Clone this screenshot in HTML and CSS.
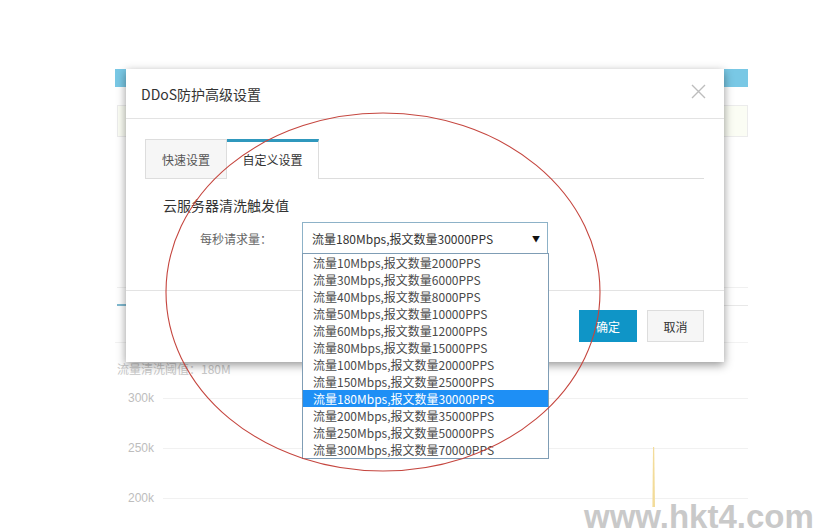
FILE: index.html
```html
<!DOCTYPE html>
<html lang="zh-CN">
<head>
<meta charset="utf-8">
<title>DDoS防护高级设置</title>
<link rel="stylesheet" href="styles.css">
</head>
<body>
<div class="page">
  <div class="bar"></div>
  <div class="notice"></div>
  <div class="subnav"><span class="subnav-active"></span></div>
  <div class="toolbar"></div>
  <div class="threshold">流量清洗阈值：180M</div>
  <div class="chart">
    <div class="row"><span class="axis">300k</span><span class="grid"></span></div>
    <div class="row"><span class="axis">250k</span><span class="grid"></span></div>
    <div class="row"><span class="axis">200k</span><span class="grid"></span></div>
    <svg class="series" width="20" height="70" viewBox="0 0 20 70"><polygon points="9,9 10.2,9 11,69 8.4,69" fill="#f3dc9a"/></svg>
  </div>
</div>

<div class="dialog">
  <div class="dlg-head">
    <span class="dlg-title">DDoS防护高级设置</span>
    <svg class="dlg-close" width="15" height="15" viewBox="0 0 15 15"><path d="M1 1L14 14M14 1L1 14" stroke="#bdbdbd" stroke-width="1.4" fill="none"/></svg>
  </div>
  <div class="dlg-body">
    <div class="tabs">
      <div class="tab">快速设置</div>
      <div class="tab tab-active">自定义设置</div>
    </div>
    <div class="section-title">云服务器清洗触发值</div>
    <div class="form-row">
      <label class="form-label">每秒请求量：</label>
      <div class="select">
        <span class="select-value">流量180Mbps,报文数量30000PPS</span>
        <span class="select-arrow">▼</span>
        <ul class="options">
          <li>流量10Mbps,报文数量2000PPS</li>
          <li>流量30Mbps,报文数量6000PPS</li>
          <li>流量40Mbps,报文数量8000PPS</li>
          <li>流量50Mbps,报文数量10000PPS</li>
          <li>流量60Mbps,报文数量12000PPS</li>
          <li>流量80Mbps,报文数量15000PPS</li>
          <li>流量100Mbps,报文数量20000PPS</li>
          <li>流量150Mbps,报文数量25000PPS</li>
          <li class="selected">流量180Mbps,报文数量30000PPS</li>
          <li>流量200Mbps,报文数量35000PPS</li>
          <li>流量250Mbps,报文数量50000PPS</li>
          <li>流量300Mbps,报文数量70000PPS</li>
        </ul>
      </div>
    </div>
  </div>
  <div class="dlg-foot">
    <button class="btn btn-primary">确定</button>
    <button class="btn">取消</button>
  </div>
</div>

<svg class="annotation" width="824" height="530" viewBox="0 0 824 530">
  <ellipse cx="383" cy="292" rx="217" ry="179" fill="none" stroke="#c5463f" stroke-width="1.1"/>
</svg>

<div class="watermark">www.hkt4.com</div>
</body>
</html>
```

FILE: styles.css
```css
html, body {
  margin: 0;
  padding: 0;
  background: #fff;
  width: 824px;
  height: 530px;
  overflow: hidden;
  font-family: "Noto Sans CJK SC", "Noto Sans", sans-serif;
  position: relative;
}

.page {
  margin-left: 115px;
  width: 633px;
  padding-top: 69px;
}

.bar {
  height: 18px;
  background: #79c8e5;
}

.notice {
  margin-top: 18px;
  margin-left: 2px;
  height: 30px;
  border: 1px solid #ececec;
  background: #fbfdf4;
}

.subnav {
  margin-top: 150px;
  margin-left: 2px;
  height: 17px;
  border-top: 1px solid #f0f0f0;
  border-bottom: 1px solid #e8e8e8;
  display: flex;
  align-items: flex-end;
}

.subnav-active {
  width: 60px;
  height: 2px;
  margin-bottom: -1px;
  background: #7fb9d0;
}

.toolbar {
  height: 36px;
  border-bottom: 1px solid #f2f2f2;
}

.threshold {
  margin-top: 18px;
  margin-left: 2px;
  font-size: 12px;
  line-height: 16px;
  color: #c8c8c8;
}

.chart {
  position: relative;
  margin-top: 11px;
  display: flex;
  flex-direction: column;
  gap: 30px;
}

.row {
  display: flex;
  align-items: center;
  height: 20px;
}

.axis {
  width: 48px;
  padding-left: 13px;
  box-sizing: border-box;
  font-family: "Liberation Sans", Arial, sans-serif;
  font-size: 12px;
  color: #bdbdbd;
}

.grid {
  flex: 1;
  height: 1px;
  background: #f1f1f1;
}

.series {
  position: absolute;
  left: 529px;
  top: 50px;
}

/* dialog */
.dialog {
  position: absolute;
  left: 126px;
  top: 69px;
  width: 598px;
  background: #fff;
  box-shadow: 0 3px 9px rgba(0, 0, 0, 0.42);
}

.dlg-head {
  height: 49px;
  border-bottom: 1px solid #e3e3e3;
  display: flex;
  align-items: center;
  justify-content: space-between;
  padding: 0 18px 0 15px;
}

.dlg-title {
  font-size: 14px;
  color: #333;
}

.dlg-close {
  margin-top: -4px;
}

.dlg-body {
  padding: 20px 20px 36px 19px;
}

.tabs {
  display: flex;
  border-bottom: 1px solid #dddddd;
  height: 39px;
}

.tab {
  box-sizing: border-box;
  height: 40px;
  margin-bottom: -1px;
  display: flex;
  align-items: center;
  font-size: 12px;
}

.tab:first-child {
  width: 82px;
  justify-content: center;
  background: #f6f6f6;
  border: 1px solid #dddddd;
  color: #555;
}

.tab-active {
  width: 92px;
  justify-content: center;
  background: #fff;
  border-top: 3px solid #2f98bd;
  border-right: 1px solid #dddddd;
  color: #333;
  padding-bottom: 2px;
}

.section-title {
  margin-top: 16px;
  margin-left: 18px;
  font-size: 14px;
  line-height: 20px;
  color: #333;
}

.form-row {
  margin-top: 7px;
  display: flex;
  align-items: center;
}

.form-label {
  width: 127px;
  text-align: right;
  font-size: 12px;
  color: #666;
  margin-right: 30px;
}

.select {
  position: relative;
  box-sizing: border-box;
  width: 246px;
  height: 32px;
  border: 1px solid #8db2c8;
  display: flex;
  align-items: center;
  justify-content: space-between;
  padding: 0 7px 0 9px;
}

.select-value {
  font-size: 12px;
  color: #333;
}

.select-arrow {
  font-size: 8px;
  color: #111;
}

.options {
  position: absolute;
  left: -1px;
  top: 100%;
  width: 247px;
  box-sizing: border-box;
  margin: 0;
  padding: 0;
  list-style: none;
  background: #fff;
  border: 1px solid #7f9db5;
}

.options li {
  height: 17px;
  line-height: 17px;
  padding-left: 10px;
  font-size: 12px;
  color: #4a4a4a;
  white-space: nowrap;
  overflow: hidden;
}

.options li.selected {
  background: #1e8ff5;
  color: #fff;
}

.dlg-foot {
  border-top: 1px solid #e3e3e3;
  padding: 19px 20px 20px;
  display: flex;
  justify-content: flex-end;
  gap: 10px;
}

.btn {
  height: 32px;
  width: 57px;
  border: 1px solid #dddddd;
  background: #f6f6f6;
  color: #333;
  font-family: "Noto Sans CJK SC", sans-serif;
  font-size: 12px;
  padding: 0;
}

.btn-primary {
  width: 58px;
  background: #0f95c7;
  border-color: #0f95c7;
  color: #fff;
}

.annotation {
  position: absolute;
  left: 0;
  top: 0;
  pointer-events: none;
}

.watermark {
  position: absolute;
  left: 584px;
  top: 504px;
  font-family: "Liberation Sans", Arial, sans-serif;
  font-weight: bold;
  font-size: 33px;
  line-height: 26px;
  color: #c9c9c9;
  white-space: nowrap;
}
```
